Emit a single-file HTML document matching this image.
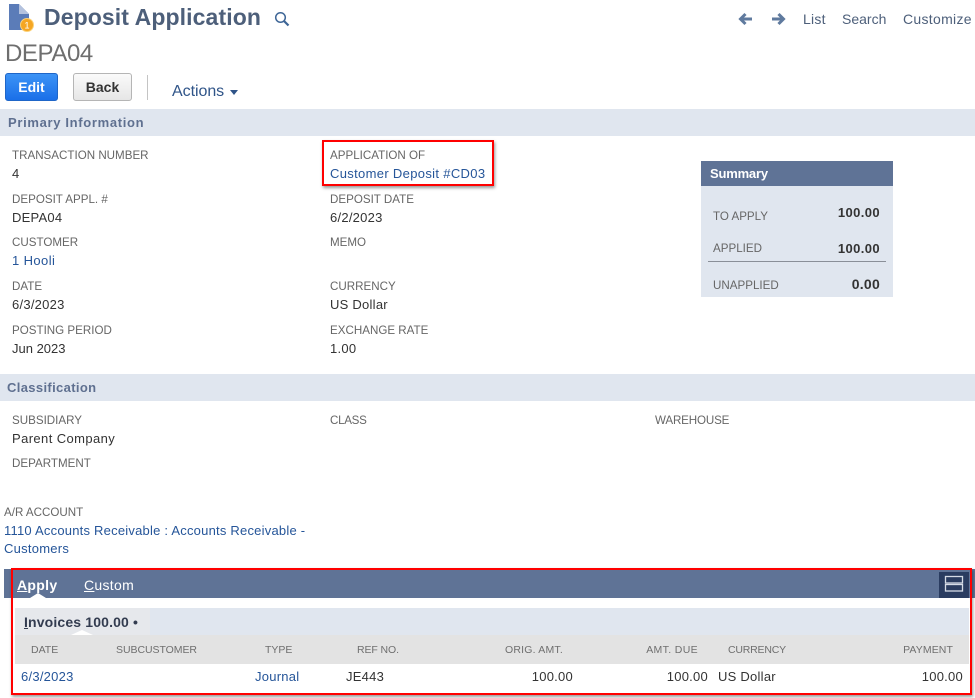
<!DOCTYPE html>
<html><head><meta charset="utf-8"><style>
html,body{margin:0;padding:0;background:#fff}
body{width:975px;height:698px;position:relative;overflow:hidden;font-family:"Liberation Sans",sans-serif;font-size:13px;color:#333}
.t{position:absolute;white-space:nowrap;line-height:16px;letter-spacing:.25px}
.l{font-size:11.6px;color:#666;letter-spacing:0}
.a{color:#255599}
.b{position:absolute}
.bar{position:absolute;left:0;width:975px;background:#e0e6ef}
.h{font-weight:bold;color:#5f7090;font-size:13px}
.th{font-size:10.5px;color:#6f6f6f;letter-spacing:0}
.red{position:absolute;border:2px solid #f00;box-shadow:1px 2px 3px rgba(0,0,0,.4);box-sizing:border-box}
.r{text-align:right}
</style></head><body>

<svg class="b" style="left:8px;top:3px" width="30" height="30" viewBox="0 0 30 30"><path d="M1 1H11L21 11V27H1Z" fill="#5b7cb8"/><path d="M11 1L21 11H11Z" fill="#b4c2de"/><circle cx="19" cy="22" r="6.500" fill="#f5a623" stroke="#fbd27a"/><text x="19" y="25.500" font-size="9" text-anchor="middle" fill="#fff" font-family="Liberation Sans">1</text></svg>
<div class="t" style="left:44px;top:2px;font-size:23px;line-height:30px;font-weight:bold;color:#4d5f7a;letter-spacing:.1px">Deposit Application</div>
<svg class="b" style="left:273px;top:10px" width="18" height="18" viewBox="0 0 18 18"><circle cx="7.500" cy="7.500" r="4.800" fill="none" stroke="#3d6596" stroke-width="1.500"/><path d="M11 11L15.500 15.500" stroke="#3d6596" stroke-width="2.200"/></svg>

<svg class="b" style="left:738px;top:12px" width="15" height="14" viewBox="0 0 15 14"><path d="M14 7H3M7.500 2L2.500 7L7.500 12" fill="none" stroke="#5f7a9e" stroke-width="3"/></svg>
<svg class="b" style="left:771px;top:12px" width="15" height="14" viewBox="0 0 15 14"><path d="M1 7H12M7.500 2L12.500 7L7.500 12" fill="none" stroke="#5f7a9e" stroke-width="3"/></svg>
<div class="t" style="left:803px;top:11px;font-size:14px;color:#4d5f7a">List</div>
<div class="t" style="left:842px;top:11px;font-size:14px;color:#4d5f7a;letter-spacing:0">Search</div>
<div class="t" style="left:903px;top:11px;font-size:14px;color:#4d5f7a;letter-spacing:.3px">Customize</div>

<div class="t" style="left:5px;top:40px;font-size:24px;line-height:28px;color:#6e6e6e;letter-spacing:-.4px">DEPA04</div>

<div class="b" style="left:5px;top:73px;width:53px;height:28px;box-sizing:border-box;border-radius:3px;background:linear-gradient(#3d94f6,#1a6fe8);border:1px solid #1f66c8;color:#fff;font-weight:bold;font-size:14px;line-height:27px;text-align:center">Edit</div>
<div class="b" style="left:73px;top:73px;width:59px;height:28px;box-sizing:border-box;border-radius:3px;background:linear-gradient(#fafafa,#e6e6e6);border:1px solid #b5b5b5;color:#333;font-weight:bold;font-size:14px;line-height:26px;text-align:center">Back</div>
<div class="b" style="left:147px;top:75px;width:1px;height:25px;background:#c4c4c4"></div>
<div class="t" style="left:172px;top:84px;font-size:16px;color:#2f5488;letter-spacing:-.05px">Actions</div>
<div class="b" style="left:230px;top:90px;border-left:4px solid transparent;border-right:4px solid transparent;border-top:5px solid #2f5488"></div>

<div class="bar" style="top:109px;height:27px"></div>
<div class="t h" style="left:8px;top:115px;letter-spacing:.67px">Primary Information</div>

<div class="t l" style="left:12px;top:148px">TRANSACTION NUMBER</div><div class="t" style="left:12px;top:166px">4</div>
<div class="t l" style="left:12px;top:192px">DEPOSIT APPL. #</div><div class="t" style="left:12px;top:210px">DEPA04</div>
<div class="t l" style="left:12px;top:235px">CUSTOMER</div><div class="t a" style="left:12px;top:253px;letter-spacing:.4px">1 Hooli</div>
<div class="t l" style="left:12px;top:279px">DATE</div><div class="t" style="left:12px;top:297px">6/3/2023</div>
<div class="t l" style="left:12px;top:323px">POSTING PERIOD</div><div class="t" style="left:12px;top:341px;letter-spacing:0">Jun 2023</div>

<div class="t l" style="left:330px;top:148px">APPLICATION OF</div><div class="t a" style="left:330px;top:166px;letter-spacing:.33px">Customer Deposit #CD03</div>
<div class="red" style="left:322px;top:140px;width:172px;height:46px"></div>
<div class="t l" style="left:330px;top:192px">DEPOSIT DATE</div><div class="t" style="left:330px;top:210px">6/2/2023</div>
<div class="t l" style="left:330px;top:235px">MEMO</div>
<div class="t l" style="left:330px;top:279px">CURRENCY</div><div class="t" style="left:330px;top:297px">US Dollar</div>
<div class="t l" style="left:330px;top:323px">EXCHANGE RATE</div><div class="t" style="left:330px;top:341px">1.00</div>

<div class="b" style="left:701px;top:161px;width:192px;height:136px;background:#e0e6ef"></div>
<div class="b" style="left:701px;top:161px;width:192px;height:25px;background:#5f7396"></div>
<div class="t" style="left:710px;top:166px;color:#fff;font-weight:bold;letter-spacing:-.2px">Summary</div>
<div class="t l" style="left:713px;top:209px">TO APPLY</div><div class="t r" style="left:800px;width:80px;top:205px;font-weight:bold;letter-spacing:.4px">100.00</div>
<div class="t l" style="left:713px;top:241px">APPLIED</div><div class="t r" style="left:800px;width:80px;top:241px;font-weight:bold;letter-spacing:.4px">100.00</div>
<div class="b" style="left:708px;top:261px;width:178px;height:1px;background:#8a8f98"></div>
<div class="t l" style="left:713px;top:278px">UNAPPLIED</div><div class="t r" style="left:800px;width:80px;top:276px;font-weight:bold;font-size:14px">0.00</div>

<div class="bar" style="top:374px;height:27px"></div>
<div class="t h" style="left:7px;top:380px;letter-spacing:.35px">Classification</div>
<div class="t l" style="left:12px;top:413px">SUBSIDIARY</div><div class="t" style="left:12px;top:431px;letter-spacing:.4px">Parent Company</div>
<div class="t l" style="left:330px;top:413px;letter-spacing:-.3px">CLASS</div>
<div class="t l" style="left:655px;top:413px;letter-spacing:-.15px">WAREHOUSE</div>
<div class="t l" style="left:12px;top:456px">DEPARTMENT</div>

<div class="t l" style="left:4px;top:505px">A/R ACCOUNT</div>
<div class="t a" style="left:4px;top:523px;letter-spacing:.22px">1110 Accounts Receivable : Accounts Receivable -</div>
<div class="t a" style="left:4px;top:541px">Customers</div>

<div class="b" style="left:4px;top:569px;width:971px;height:29px;background:#5f7396"></div>
<div class="t" style="left:17px;top:577px;color:#fff;font-weight:bold;font-size:14px;letter-spacing:.3px"><u>A</u>pply</div>
<div class="t" style="left:84px;top:577px;color:#fff;font-size:14px;letter-spacing:.3px"><u>C</u>ustom</div>
<div class="b" style="left:30px;top:593px;border-left:8px solid transparent;border-right:8px solid transparent;border-bottom:5px solid #fff"></div>
<div class="b" style="left:939px;top:572px;width:30px;height:26px;background:#2a3c60"></div>
<svg class="b" style="left:944px;top:575px" width="20" height="18" viewBox="0 0 20 18"><rect x="1.500" y="1.500" width="17" height="6.500" fill="none" stroke="#d5dbe6" stroke-width="1.300"/><rect x="1.500" y="9.500" width="17" height="6.500" fill="none" stroke="#d5dbe6" stroke-width="1.300"/></svg>

<div class="b" style="left:15px;top:608px;width:954px;height:27px;background:#e0e6ef"></div>
<div class="b" style="left:15px;top:608px;width:135px;height:27px;background:#e6e8ec"></div>
<div class="t" style="left:24px;top:614px;font-weight:bold;font-size:14px;color:#333c50;letter-spacing:.15px"><u>I</u>nvoices 100.00 •</div>
<div class="b" style="left:71px;top:630px;border-left:11px solid transparent;border-right:11px solid transparent;border-bottom:5px solid #fff;z-index:2"></div>
<div class="b" style="left:15px;top:635px;width:954px;height:29px;background:#e3e3e3"></div>
<div class="t th" style="left:31px;top:642px">DATE</div>
<div class="t th" style="left:116px;top:642px;letter-spacing:-.05px">SUBCUSTOMER</div>
<div class="t th" style="left:265px;top:642px">TYPE</div>
<div class="t th" style="left:357px;top:642px;letter-spacing:-.1px">REF NO.</div>
<div class="t th r" style="left:463px;width:100px;top:642px;letter-spacing:.2px">ORIG. AMT.</div>
<div class="t th r" style="left:598px;width:100px;top:642px;letter-spacing:.35px">AMT. DUE</div>
<div class="t th" style="left:728px;top:642px;letter-spacing:-.2px">CURRENCY</div>
<div class="t th r" style="left:853px;width:100px;top:642px;letter-spacing:.1px">PAYMENT</div>

<div class="t a" style="left:21px;top:669px">6/3/2023</div>
<div class="t a" style="left:255px;top:669px">Journal</div>
<div class="t" style="left:346px;top:669px">JE443</div>
<div class="t r" style="left:473px;width:100px;top:669px">100.00</div>
<div class="t r" style="left:608px;width:100px;top:669px">100.00</div>
<div class="t" style="left:718px;top:669px">US Dollar</div>
<div class="t r" style="left:863px;width:100px;top:669px">100.00</div>

<div class="red" style="left:11px;top:568px;width:961px;height:127px"></div>
</body></html>
